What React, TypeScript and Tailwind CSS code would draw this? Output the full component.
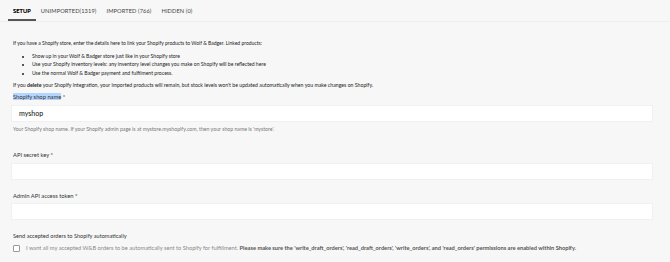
import { useState } from "react";

const tabs = ["SETUP", "UNIMPORTED(1319)", "IMPORTED (766)", "HIDDEN (0)"];

function Field({ label, value, help }: { label: string; value?: string; help?: string }) {
  return (
    <div>
      <div className="px-[2px] text-[5.8px] text-[#333] leading-[8px]">
        {label === "Shopify shop name" ? <span className="bg-[#b4d5fe]">{label}</span> : label} *
      </div>
      <input
        readOnly
        value={value ?? ""}
        className="mt-[3.5px] block w-[642px] h-[17px] bg-white border border-[#f0f0f0] px-[7px] text-[7px] font-medium text-[#222] outline-none"
      />
      {help && <div className="mt-[3px] px-[2px] text-[5.2px] text-[#777] leading-[8px]">{help}</div>}
    </div>
  );
}

export default function App() {
  const [active] = useState(0);
  const [checked, setChecked] = useState(false);

  return (
    <div className="w-[670px] h-[262px] overflow-hidden bg-[#f7f7f7] font-['Lato',sans-serif] text-[#222]">
      <div className="flex px-[8px] border-b border-[#efefef]">
        {tabs.map((t, i) => (
          <div
            key={t}
            className={`pt-[7px] pb-[4px] px-[5px] text-[5.7px] tracking-[0.1px] leading-[8px] border-b-2 ${
              i === active ? "border-[#555] text-[#000] [text-shadow:0_0_0.3px_#000]" : "border-transparent text-[#444]"
            }`}
          >
            {t}
          </div>
        ))}
      </div>

      <div className="px-[11px] pt-[17px]">
        <p className="px-[2px] text-[5px] leading-[8px]">
          If you have a Shopify store, enter the details here to link your Shopify products to Wolf &amp; Badger. Linked products:
        </p>
        <ul className="mt-[4.5px] pl-[21px] list-disc text-[5.1px] leading-[8.5px]">
          <li>Show up in your Wolf &amp; Badger store just like in your Shopify store</li>
          <li>Use your Shopify inventory levels: any inventory level changes you make on Shopify will be reflected here</li>
          <li>Use the normal Wolf &amp; Badger payment and fulfilment process.</li>
        </ul>
        <p className="mt-[3.5px] px-[2px] text-[5.2px] leading-[8px]">
          If you <b>delete</b> your Shopify integration, your imported products will remain, but stock levels won't be
          updated automatically when you make changes on Shopify.
        </p>

        <div className="mt-[4.5px]">
          <Field
            label="Shopify shop name"
            value="myshop"
            help="Your Shopify shop name. If your Shopify admin page is at mystore.myshopify.com, then your shop name is 'mystore'."
          />
        </div>
        <div className="mt-[18.5px]">
          <Field label="API secret key" />
        </div>
        <div className="mt-[12px]">
          <Field label="Admin API access token" />
        </div>

        <div className="mt-[12px] px-[2px] text-[5.6px] leading-[8px] text-[#333]">
          Send accepted orders to Shopify automatically
        </div>
        <label className="mt-[4px] px-[2px] flex items-center gap-[6px] text-[5.7px] text-[#888] leading-[8px]">
          <input
            type="checkbox"
            checked={checked}
            onChange={(e) => setChecked(e.target.checked)}
            className="w-[7px] h-[7px] m-0 appearance-none border border-[#999] rounded-[1px] bg-white shrink-0"
          />
          <span className="whitespace-nowrap">
            I want all my accepted W&amp;B orders to be automatically sent to Shopify for fulfillment.{" "}
            <b className="text-[#555]">
              Please make sure the 'write_draft_orders', 'read_draft_orders', 'write_orders', and 'read_orders'
              permissions are enabled within Shopify.
            </b>
          </span>
        </label>
      </div>
    </div>
  );
}
